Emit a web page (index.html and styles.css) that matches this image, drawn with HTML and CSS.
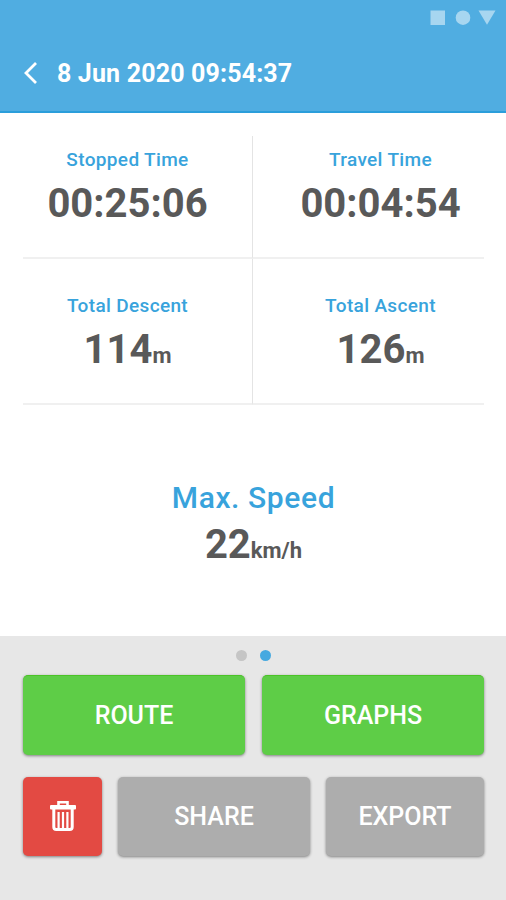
FILE: index.html
```html
<!DOCTYPE html>
<html lang="en">
<head>
    <meta charset="UTF-8">
    <meta name="viewport" content="width=device-width, initial-scale=1.0">
    <title>Track details</title>
    <link rel="stylesheet" href="styles.css">
</head>
<body>
    <header class="header">
        <div class="status-bar">
            <svg width="66" height="16" viewBox="0 0 66 16">
                <rect x="0.5" y="0.5" width="14.5" height="14.5"/>
                <circle cx="33" cy="7.7" r="7.3"/>
                <path d="M48.5 0.5h17L57 14.7z"/>
            </svg>
        </div>
        <div class="title-bar">
            <svg class="back" width="14" height="24" viewBox="0 0 14 24">
                <path d="M13 2L3 12L13 22"/>
            </svg>
            <h1>8 Jun 2020 09:54:37</h1>
        </div>
    </header>
    <main class="content">
        <div class="stats">
            <div class="stat">
                <div class="label">Stopped Time</div>
                <div class="value">00:25:06</div>
            </div>
            <div class="stat">
                <div class="label">Travel Time</div>
                <div class="value">00:04:54</div>
            </div>
            <div class="stat">
                <div class="label">Total Descent</div>
                <div class="value">114<span class="unit">m</span></div>
            </div>
            <div class="stat">
                <div class="label">Total Ascent</div>
                <div class="value">126<span class="unit">m</span></div>
            </div>
        </div>
        <div class="speed">
            <div class="label">Max. Speed</div>
            <div class="value">22<span class="unit">km/h</span></div>
        </div>
    </main>
    <footer class="footer">
        <div class="dots">
            <span class="dot"></span>
            <span class="dot active"></span>
        </div>
        <div class="buttons main-buttons">
            <button class="green">ROUTE</button>
            <button class="green">GRAPHS</button>
        </div>
        <div class="buttons small-buttons">
            <button class="red" aria-label="Delete">
                <svg width="28" height="32" viewBox="0 0 28 32">
                    <rect class="lid" x="1" y="5" width="26" height="4.6" rx="1"/>
                    <path class="handle" d="M9.5 6V2.2h9V6"/>
                    <path class="bin" d="M4.8 9v18q0 2.5 2.5 2.5h13.4q2.5 0 2.5-2.5V9"/>
                    <path class="bars" d="M9.6 12v17M14 12v17M18.4 12v17"/>
                </svg>
            </button>
            <button class="gray">SHARE</button>
            <button class="gray">EXPORT</button>
        </div>
    </footer>
</body>
</html>
```
FILE: styles.css
```css
* {
    box-sizing: border-box;
}
body {
    margin: 0;
    height: 900px;
    display: flex;
    flex-direction: column;
    font-family: Roboto, sans-serif;
    background-color: #ffffff;
}
.header {
    height: 113px;
    background-color: #50ade1;
    border-bottom: 2px solid #2b9edb;
}
.status-bar {
    display: flex;
    justify-content: flex-end;
    height: 50px;
    padding: 10px 10px 0 0;
}
.status-bar svg {
    fill: #a7d6f0;
}
.title-bar {
    display: flex;
    align-items: center;
    gap: 20px;
    height: 46px;
    padding-left: 23px;
}
.back {
    fill: none;
    stroke: #ffffff;
    stroke-width: 2.8;
}
h1 {
    margin: 2px 0 0;
    font-size: 25px;
    font-weight: 700;
    line-height: 30px;
    letter-spacing: 0.15px;
    color: #ffffff;
}
.content {
    flex: 1;
    padding: 23px 22px 0 23px;
    text-align: center;
}
.stats {
    display: grid;
    grid-template-columns: 230px 231px;
    grid-template-rows: 123px 146px;
}
.stat {
    padding-top: 12px;
    border-bottom: 2px solid #f0f0f0;
}
.stat:nth-child(odd) {
    padding-right: 20px;
    border-right: 1px solid #e4e4e4;
}
.stat:nth-child(even) {
    padding-left: 24px;
}
.stat:nth-child(n+3) {
    padding-top: 35px;
}
.label {
    font-size: 19px;
    font-weight: 500;
    line-height: 24px;
    letter-spacing: 0.35px;
    color: #38a3dc;
}
.value {
    margin-top: 9px;
    font-size: 40px;
    font-weight: 700;
    line-height: 46px;
    color: #595959;
}
.unit {
    font-size: 22px;
}
.speed {
    padding-top: 75px;
}
.speed .label {
    font-size: 30px;
    line-height: 36px;
    letter-spacing: 0.6px;
}
.speed .value {
    margin-top: 6px;
}
.footer {
    height: 264px;
    padding: 14px 22px 0 23px;
    background-color: #e7e7e7;
}
.dots {
    display: flex;
    justify-content: center;
    gap: 13px;
    height: 25px;
    padding-right: 1px;
}
.dot {
    width: 11px;
    height: 11px;
    border-radius: 50%;
    background-color: #c5c5c5;
}
.dot.active {
    background-color: #46a9e0;
}
.buttons {
    display: grid;
}
.main-buttons {
    grid-template-columns: 1fr 1fr;
    gap: 17px;
    height: 80px;
    margin-bottom: 22px;
}
.small-buttons {
    grid-template-columns: 79px 192px 158px;
    gap: 16px;
    height: 79px;
}
button {
    display: flex;
    align-items: center;
    justify-content: center;
    padding: 0;
    border: none;
    border-radius: 5px;
    font-family: inherit;
    font-size: 25px;
    font-weight: 500;
    color: #ffffff;
    box-shadow: 0 1px 3px rgba(0, 0, 0, 0.45);
}
.green {
    background-color: #5ecd47;
    border-top: 1px solid #4bc327;
}
.red {
    background-color: #e34a43;
}
.gray {
    background-color: #adadad;
}
.red svg {
    margin-bottom: 2px;
    fill: none;
    stroke: #ffffff;
}
.red .lid {
    fill: #ffffff;
    stroke: none;
}
.handle {
    stroke-width: 2.6;
}
.bin {
    stroke-width: 3;
}
.bars {
    stroke-width: 2.2;
}
```
